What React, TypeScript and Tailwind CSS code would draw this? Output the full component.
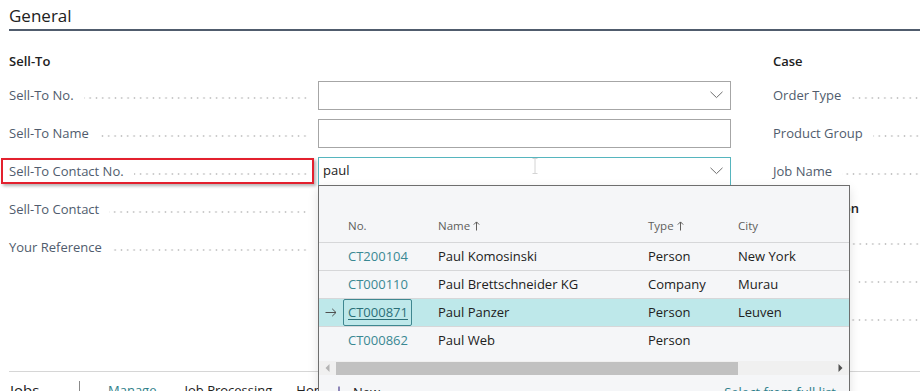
import { ReactNode } from 'react';

const FONT = "font-['Open_Sans','Noto_Sans',sans-serif]";

const DOTS =
  'h-[2px] flex-1 bg-[radial-gradient(circle,#c4c4c4_0.8px,transparent_1.1px)] bg-[length:6.33px_2px] bg-right';

function Chevron() {
  return (
    <svg width="13" height="8" viewBox="0 0 13 8" className="shrink-0">
      <path d="M0.5 0.8 L6.5 6.6 L12.5 0.8" fill="none" stroke="#6e6e6e" strokeWidth="1" />
    </svg>
  );
}

function Field({
  label,
  value,
  lookup,
  focused,
}: {
  label: string;
  value?: string;
  lookup?: boolean;
  focused?: boolean;
}) {
  return (
    <div className="flex h-[38px] items-center">
      <div className="flex w-[309px] items-center pr-[10px]">
        <span className="whitespace-nowrap text-[13px] leading-[20px] text-[#505c6d]">{label}</span>
        <span className={`ml-[10px] mt-[6px] ${DOTS}`} />
      </div>
      <div
        className={`flex h-[29px] w-[413px] items-center bg-white pl-[4px] pr-[7px] text-[13px] text-[#212121] ${
          focused ? 'border border-[#56b5be]' : 'border border-[#a6a6a6]'
        }`}
      >
        <span className="flex-1">{value}</span>
        {lookup && <Chevron />}
      </div>
    </div>
  );
}

function SideField({ label }: { label: string }) {
  return (
    <div className="flex h-[38px] items-center">
      <span className="whitespace-nowrap text-[13px] leading-[20px] text-[#505c6d]">{label}</span>
      <span className={`ml-[10px] mt-[6px] ${DOTS}`} />
    </div>
  );
}

function SortUp() {
  return (
    <svg width="7" height="10" viewBox="0 0 7 10" className="ml-[3px] inline-block align-[-1px]">
      <path d="M3.5 9.5 V1 M0.8 3.6 L3.5 0.9 L6.2 3.6" fill="none" stroke="#605e5c" strokeWidth="1" />
    </svg>
  );
}

const contacts = [
  { no: 'CT200104', name: 'Paul Komosinski', type: 'Person', city: 'New York' },
  { no: 'CT000110', name: 'Paul Brettschneider KG', type: 'Company', city: 'Murau' },
  { no: 'CT000871', name: 'Paul Panzer', type: 'Person', city: 'Leuven', selected: true },
  { no: 'CT000862', name: 'Paul Web', type: 'Person', city: '' },
];

function Cell({ w, children }: { w: string; children?: ReactNode }) {
  return <div className={`${w} shrink-0 whitespace-nowrap`}>{children}</div>;
}

function ContactLookup() {
  return (
    <div className="absolute left-[318px] top-[185px] h-[230px] w-[532px] overflow-hidden border border-[#6e6e6e] bg-[#f5f6f8] shadow-[0_4px_10px_rgba(0,0,0,0.12)]">
      {/* column headers */}
      <div className="flex h-[57px] items-end border-b border-[#d6d7d9] pb-[8px] text-[11.5px] leading-[16px] text-[#605e5c]">
        <Cell w="w-[24px]" />
        <Cell w="w-[95px] pl-[5px]">No.</Cell>
        <Cell w="w-[210px]">
          Name
          <SortUp />
        </Cell>
        <Cell w="w-[90px]">
          Type
          <SortUp />
        </Cell>
        <Cell w="flex-1">City</Cell>
      </div>

      {contacts.map((c, i) => (
        <div
          key={c.no}
          className={`flex h-[28px] items-center text-[13px] text-[#212121] ${
            i < contacts.length - 1 ? 'border-b border-[#d6d7d9]' : ''
          } ${c.selected ? 'bg-[#bee8ea]' : ''}`}
        >
          <Cell w="w-[24px] pl-[6px]">
            {c.selected && (
              <svg width="12" height="9" viewBox="0 0 12 9" className="block">
                <path d="M0.5 4.5 H11 M7.2 0.8 L11 4.5 L7.2 8.2" fill="none" stroke="#505050" strokeWidth="1" />
              </svg>
            )}
          </Cell>
          <Cell w="w-[95px]">
            {c.selected ? (
              <span className="inline-flex h-[27px] w-[69px] items-center rounded-[2px] border border-[#3f8790] pl-[4px] text-[#2b6f78] underline underline-offset-2">
                {c.no}
              </span>
            ) : (
              <span className="pl-[5px] text-[#3a8893]">{c.no}</span>
            )}
          </Cell>
          <Cell w="w-[210px]">{c.name}</Cell>
          <Cell w="w-[90px]">{c.type}</Cell>
          <Cell w="flex-1">{c.city}</Cell>
        </div>
      ))}

      {/* horizontal scrollbar */}
      <div className="mt-[6px] flex h-[14px] items-center bg-[#f0f0f0]">
        <div className="flex w-[17px] items-center justify-center">
          <svg width="5" height="8" viewBox="0 0 5 8">
            <path d="M4.5 0 L0.5 4 L4.5 8 Z" fill="#b4b4b4" />
          </svg>
        </div>
        <div className="h-[13px] w-[402px] bg-[#c1c1c1]" />
        <div className="flex flex-1 items-center justify-end pr-[6px]">
          <svg width="5" height="8" viewBox="0 0 5 8">
            <path d="M0.5 0 L4.5 4 L0.5 8 Z" fill="#505050" />
          </svg>
        </div>
      </div>

      {/* actions */}
      <div className="flex items-center pt-[7px] text-[13px] leading-[20px]">
        <svg width="12" height="12" viewBox="0 0 12 12" className="ml-[14px] mr-[8px]">
          <path d="M6 0.5 V11.5 M0.5 6 H11.5" fill="none" stroke="#4a3d8f" strokeWidth="1.2" />
        </svg>
        <span className="text-[#212121]">New</span>
        <span className="ml-auto mr-[13px] text-[#2f7f8a]">Select from full list</span>
      </div>
    </div>
  );
}

export default function App() {
  return (
    <div className={`relative h-[391px] w-[920px] overflow-hidden bg-white ${FONT}`}>
      {/* General header */}
      <div className="pl-[9px]">
        <div className="h-[29px] pt-[4px] text-[17px] leading-[24px] text-[#212121]">General</div>
        <div className="h-[2px] bg-[#505c6d]" />
      </div>

      <div className="flex pl-[9px] pt-[20px]">
        {/* Sell-To column */}
        <div className="w-[722px] shrink-0">
          <div className="h-[20px] text-[13px] font-semibold leading-[20px] text-[#212121]">Sell-To</div>
          <div className="mt-[5px]">
            <Field label="Sell-To No." lookup />
            <Field label="Sell-To Name" />
            <Field label="Sell-To Contact No." value="paul" lookup focused />
            <Field label="Sell-To Contact" />
            <Field label="Your Reference" />
          </div>
        </div>

        {/* Case column */}
        <div className="ml-[42px] flex-1">
          <div className="h-[20px] text-[13px] font-semibold leading-[20px] text-[#212121]">Case</div>
          <div className="mt-[5px]">
            <SideField label="Order Type" />
            <SideField label="Product Group" />
            <SideField label="Job Name" />
          </div>
          <div className="mt-[8px] h-[20px] whitespace-nowrap text-[13px] font-semibold leading-[20px] text-[#212121]">
            Task Location
          </div>
          <div className="mt-[4px]">
            <SideField label="Job No." />
            <SideField label="Job Task No." />
            <SideField label="Job Status" />
          </div>
        </div>
      </div>

      {/* Jobs part */}
      <div className="ml-[9px] mt-[35px] flex border-t border-[#d6d6d6] pt-[8px] leading-[20px]">
        <div className="w-[70px] pl-[1px] text-[15px] text-[#212121]">Jobs</div>
        <div className="mt-[1px] h-[20px] border-l border-[#8a8a8a]" />
        <div className="ml-[28px] text-[13px] text-[#2f7f8a]">Manage</div>
        <div className="ml-[28px] text-[13px] text-[#212121]">Job Processing</div>
        <div className="ml-[24px] text-[13px] text-[#212121]">Home</div>
      </div>

      {/* text cursor */}
      <svg width="6" height="16" viewBox="0 0 6 16" className="absolute left-[532px] top-[158px]">
        <path d="M0.5 0.5 H5.5 M3 0.5 V15.5 M0.5 15.5 H5.5" fill="none" stroke="#d4d4d4" strokeWidth="1" />
      </svg>

      {/* highlight annotation */}
      <div className="absolute left-[1px] top-[158px] h-[26px] w-[313px] border-2 border-[#e3212e] shadow-[2px_2px_3px_rgba(0,0,0,0.3)]" />

      <ContactLookup />
    </div>
  );
}
